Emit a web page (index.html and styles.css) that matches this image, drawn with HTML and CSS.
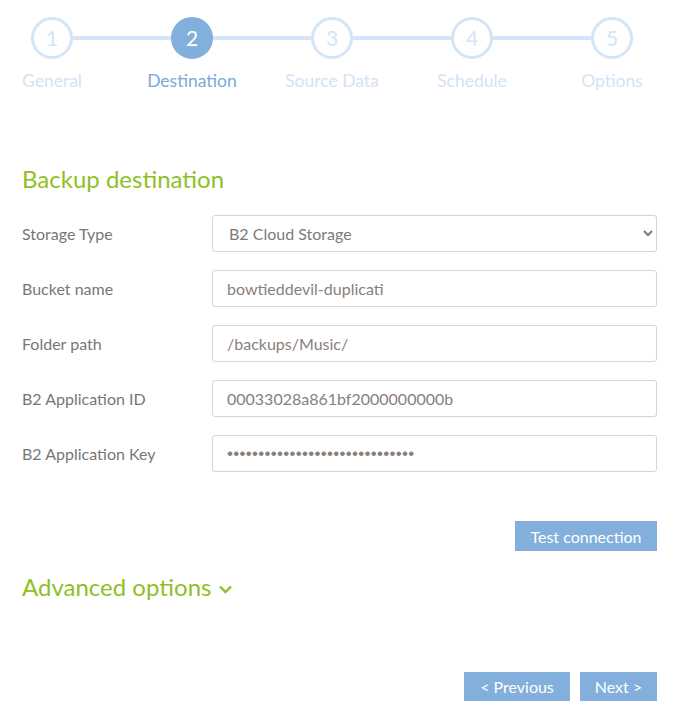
FILE: index.html
```html
<!DOCTYPE html>
<html>
<head>
<meta charset="utf-8">
<link rel="stylesheet" href="styles.css">
</head>
<body>
<div class="page">
  <div class="stepper">
    <div class="step"><div class="circle">1</div><div class="label">General</div></div>
    <div class="step active"><div class="circle">2</div><div class="label">Destination</div></div>
    <div class="step"><div class="circle">3</div><div class="label">Source Data</div></div>
    <div class="step"><div class="circle">4</div><div class="label">Schedule</div></div>
    <div class="step last"><div class="circle">5</div><div class="label">Options</div></div>
  </div>

  <h2 class="section-title">Backup destination</h2>

  <form class="form">
    <div class="row">
      <label class="field-label">Storage Type</label>
      <select class="control select">
        <option>B2 Cloud Storage</option>
      </select>
    </div>
    <div class="row">
      <label class="field-label">Bucket name</label>
      <input class="control" type="text" value="bowtieddevil-duplicati">
    </div>
    <div class="row">
      <label class="field-label">Folder path</label>
      <input class="control" type="text" value="/backups/Music/">
    </div>
    <div class="row">
      <label class="field-label">B2 Application ID</label>
      <input class="control" type="text" value="00033028a861bf2000000000b">
    </div>
    <div class="row">
      <label class="field-label">B2 Application Key</label>
      <input class="control password" type="password" value="123456789012345678901234567890">
    </div>
  </form>

  <div class="test-row">
    <button class="btn">Test connection</button>
  </div>

  <h2 class="section-title advanced">Advanced options
    <svg class="chev" width="15" height="10" viewBox="0 0 15 10"><path d="M2 2.5 L7.5 8 L13 2.5" fill="none" stroke="#8fc027" stroke-width="2.4"/></svg>
  </h2>

  <div class="nav-row">
    <button class="btn prev">&lt; Previous</button>
    <button class="btn next">Next &gt;</button>
  </div>
</div>
</body>
</html>
```

FILE: styles.css
```css
html, body {
  margin: 0;
  padding: 0;
  background: #ffffff;
}
body {
  font-family: Lato, "Open Sans", sans-serif;
}
.page {
  width: 635px;
  padding: 17px 0 0 22px;
}
.stepper {
  display: grid;
  grid-template-columns: repeat(5, 140px);
  margin-left: -40px;
}
.step {
  position: relative;
  display: flex;
  flex-direction: column;
  align-items: center;
}
.step::after {
  content: "";
  position: absolute;
  left: 50%;
  width: 100%;
  top: 19px;
  height: 4px;
  background: #d3e5f6;
  z-index: 0;
}
.step.last::after {
  display: none;
}
.circle {
  position: relative;
  z-index: 1;
  width: 36px;
  height: 36px;
  border: 3px solid #d3e5f6;
  border-radius: 50%;
  background: #fff;
  color: #d3e5f6;
  font-size: 21px;
  line-height: 36px;
  text-align: center;
}
.step.active .circle {
  background: #82afdb;
  border-color: #82afdb;
  color: #fff;
}
.label {
  margin-top: 11px;
  font-size: 17.5px;
  line-height: 22px;
  color: #d3e3f4;
}
.step.active .label {
  color: #7ca9d6;
}
.section-title {
  margin: 72px 0 0 0;
  font-weight: normal;
  font-size: 24px;
  line-height: 30px;
  color: #8fc027;
}
.form {
  margin-top: 21px;
  display: flex;
  flex-direction: column;
  gap: 18px;
}
.row {
  display: flex;
  align-items: center;
}
.field-label {
  width: 190px;
  font-size: 16px;
  color: #777777;
}
.control {
  box-sizing: border-box;
  width: 445px;
  height: 37px;
  border: 1px solid #d4d4d4;
  border-radius: 3px;
  padding: 0 14px;
  font-family: Lato, "Open Sans", sans-serif;
  font-size: 16px;
  color: #8a807a;
  background: #fff;
  outline: none;
}
.select {
  padding-left: 12px;
  color: #807a76;
}
.password {
  font-family: "Liberation Sans", sans-serif;
  font-size: 17px;
  letter-spacing: 0.3px;
}
.btn {
  border: none;
  background: #82afdb;
  color: #fff;
  font-family: Lato, "Open Sans", sans-serif;
  font-size: 16px;
  height: 30px;
  padding: 0 15px;
  white-space: nowrap;
  cursor: pointer;
}
.test-row {
  display: flex;
  justify-content: flex-end;
  margin-top: 49px;
}
.test-row .btn {
  width: 142px;
}
.advanced {
  margin-top: 21px;
  display: flex;
  align-items: center;
  gap: 7px;
}
.chev {
  margin-top: 3px;
}
.nav-row {
  display: flex;
  justify-content: flex-end;
  gap: 10px;
  margin-top: 70px;
}
.nav-row .btn {
  height: 29px;
  padding: 0;
}
.nav-row .prev {
  width: 106px;
}
.nav-row .next {
  width: 77px;
}
```
